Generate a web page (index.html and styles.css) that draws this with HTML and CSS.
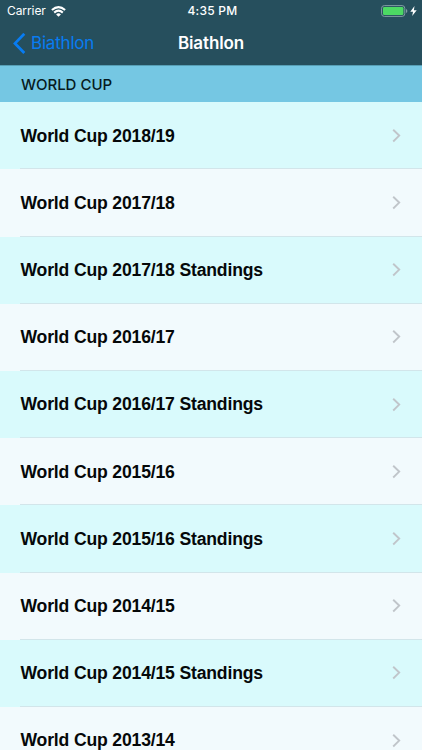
FILE: index.html
```html
<!DOCTYPE html>
<html lang="en">
<head>
<meta charset="utf-8">
<title>Biathlon</title>
<link rel="stylesheet" href="styles.css">
</head>
<body>
<svg class="symbols" width="0" height="0" aria-hidden="true">
  <symbol id="chevron" viewBox="0 0 9 14"><path d="M1.2 .7 7.2 6.6 1.2 12.5" fill="none" stroke="#c0c5ca" stroke-width="1.9"/></symbol>
</svg>
<header class="top">
  <div class="status">
    <div class="carrier"><span>Carrier</span>
      <svg class="wifi" width="15" height="11" viewBox="0 0 15 11"><g fill="none" stroke="#fff" stroke-width="2.1"><path d="M.9 4Q7.5-1.8 14.1 4"/><path d="M3.2 6.6Q7.5 2.8 11.8 6.6"/></g><path d="M5.1 8.4Q7.5 6.2 9.9 8.4L7.5 10.8Z" fill="#fff"/></svg>
    </div>
    <div class="time">4:35 PM</div>
    <div class="power">
      <svg width="27" height="12" viewBox="0 0 27 12"><rect x=".6" y=".6" width="23.2" height="10.8" rx="2.7" fill="none" stroke="#819da3" stroke-width="1"/><rect x="2" y="2" width="20.4" height="8" rx="1.3" fill="#4cd964"/><path d="M25 4q1.4.5 1.4 2T25 8Z" fill="#819da3"/></svg>
      <svg class="bolt" width="7" height="10" viewBox="0 0 7 10"><path d="M4.5 0 .3 5.7H3L2.2 10 6.7 4.2H3.9Z" fill="#fff"/></svg>
    </div>
  </div>
  <nav class="nav">
    <a class="back"><svg width="13" height="22" viewBox="0 0 13 22"><path d="M11.3 .8 2 10.4l9.3 9.6" fill="none" stroke="#087cf2" stroke-width="2.8"/></svg><span>Biathlon</span></a>
    <h1 class="title">Biathlon</h1>
  </nav>
</header>
<main>
  <h2 class="section"><span>WORLD CUP</span></h2>
  <ul class="list">
    <li><span>World Cup 2018/19</span><svg><use href="#chevron"/></svg></li>
    <li><span>World Cup 2017/18</span><svg><use href="#chevron"/></svg></li>
    <li><span>World Cup 2017/18 Standings</span><svg><use href="#chevron"/></svg></li>
    <li><span>World Cup 2016/17</span><svg><use href="#chevron"/></svg></li>
    <li><span>World Cup 2016/17 Standings</span><svg><use href="#chevron"/></svg></li>
    <li><span>World Cup 2015/16</span><svg><use href="#chevron"/></svg></li>
    <li><span>World Cup 2015/16 Standings</span><svg><use href="#chevron"/></svg></li>
    <li><span>World Cup 2014/15</span><svg><use href="#chevron"/></svg></li>
    <li><span>World Cup 2014/15 Standings</span><svg><use href="#chevron"/></svg></li>
    <li><span>World Cup 2013/14</span><svg><use href="#chevron"/></svg></li>
  </ul>
</main>
</body>
</html>
```
FILE: styles.css
```css
* { box-sizing: border-box; margin: 0; padding: 0; }
body { width: 422px; height: 750px; overflow: hidden; background: #f2fafd; font-family: Inter, "Liberation Sans", sans-serif; }
.symbols { display: block; }
.top { height: 65px; background: #264f5d; color: #fff; }
.status { height: 22px; display: grid; grid-template-columns: 1fr auto 1fr; align-items: center; padding: 0 5px 0 7px; font-size: 12px; line-height: 22px; }
.carrier { display: flex; align-items: center; gap: 5px; letter-spacing: -.08px; }
.time { font-weight: 500; letter-spacing: .25px; padding-left: 1px; }
.power { display: flex; align-items: center; justify-content: flex-end; gap: 2px; }
.nav { height: 43px; display: grid; grid-template-columns: 1fr auto 1fr; align-items: center; line-height: 43px; }
.back { display: flex; align-items: center; gap: 5px; padding-left: 13px; color: #087cf2; font-size: 17px; letter-spacing: -.2px; }
.title { font-size: 17px; font-weight: 600; letter-spacing: -.12px; }
.section { height: 37.3px; padding-left: 21px; background: #75c7e3; border-top: 1px solid #579fb5; color: #061a20; font-size: 15px; font-weight: 500; line-height: 38px; letter-spacing: 0; }
.list { list-style: none; }
.list li { height: 67.2px; padding: 0 21px 0 20.5px; display: flex; align-items: center; justify-content: space-between; background: linear-gradient(#d2e5ea, #d2e5ea) 20px 100% / 100% 1px no-repeat #f2fafd; color: #050809; font: bold 17.6px "Liberation Sans", Arial, sans-serif; letter-spacing: -.17px; }
.list li span { padding-top: .4px; }
.list li:nth-child(odd) { background-color: #d9fafc; }
.list svg { width: 9px; height: 14px; }
```
